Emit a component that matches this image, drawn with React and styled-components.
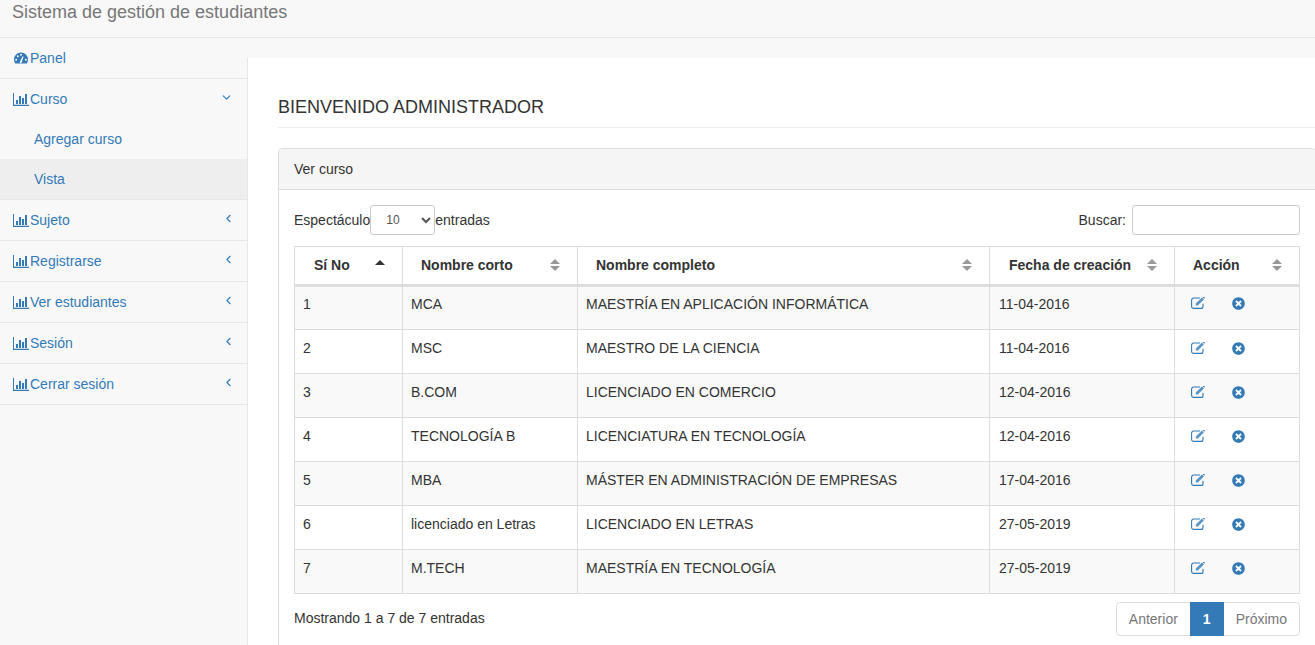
import React from 'react'
import styled, { createGlobalStyle } from 'styled-components'
import { FaTimesCircle } from 'react-icons/fa'
import { FiChevronDown, FiChevronLeft } from 'react-icons/fi'

const GlobalStyle = createGlobalStyle`
    html, body {
        margin: 0;
        height: 100%;
        overflow: hidden;
    }

    body {
        background: #f8f8f8;
        color: #333;
        font-family: "Liberation Sans", Arial, sans-serif;
        font-size: 14px;
        line-height: 20px;
    }

    * {
        box-sizing: border-box;
    }
`

const menu = [
    { label: 'Curso', open: true, children: ['Agregar curso', 'Vista'] },
    { label: 'Sujeto' },
    { label: 'Registrarse' },
    { label: 'Ver estudiantes' },
    { label: 'Sesión' },
    { label: 'Cerrar sesión' },
]

const courses = [
    ['1', 'MCA', 'MAESTRÍA EN APLICACIÓN INFORMÁTICA', '11-04-2016'],
    ['2', 'MSC', 'MAESTRO DE LA CIENCIA', '11-04-2016'],
    ['3', 'B.COM', 'LICENCIADO EN COMERCIO', '12-04-2016'],
    ['4', 'TECNOLOGÍA B', 'LICENCIATURA EN TECNOLOGÍA', '12-04-2016'],
    ['5', 'MBA', 'MÁSTER EN ADMINISTRACIÓN DE EMPRESAS', '17-04-2016'],
    ['6', 'licenciado en Letras', 'LICENCIADO EN LETRAS', '27-05-2019'],
    ['7', 'M.TECH', 'MAESTRÍA EN TECNOLOGÍA', '27-05-2019'],
]

const columns = [
    { label: 'Sí No', width: 108, sorted: true },
    { label: 'Nombre corto', width: 175 },
    { label: 'Nombre completo', width: 412 },
    { label: 'Fecha de creación', width: 185 },
    { label: 'Acción', width: 125 },
]

const BarChart = () => (
    <svg width="16" height="13" viewBox="0 0 16 13" fill="currentColor">
        <path d="M0 0h1v11.800h15V13H0z" />
        <path d="M3 7h2v4H3zM6 3h2v8H6zM9 5h2v6H9zM12 1h2v10h-2z" />
    </svg>
)

const Gauge = () => (
    <svg width="14" height="12" viewBox="0 0 14 12">
        <path
            fill="currentColor"
            d="M7 .5A7 7 0 0 0 0 7.500c0 1.400.4 2.700 1.100 3.800.1.200.3.200.5.200h10.800c.2 0 .4 0 .5-.2A7 7 0 0 0 14 7.500 7 7 0 0 0 7 .5z"
        />
        <g fill="#f8f8f8">
            <circle cx="2.200" cy="7.800" r="1" />
            <circle cx="3.800" cy="4.200" r="1" />
            <circle cx="7" cy="2.800" r="1" />
            <circle cx="11.800" cy="7.800" r="1" />
            <path d="M6 9.500l2.600-5.200 1 .4L7.800 10a1 1 0 1 1-1.800-.5z" />
        </g>
    </svg>
)

const EditIcon = () => (
    <svg width="14" height="13" viewBox="0 1 14 13">
        <path
            d="M9 2H2.800A2.300 2.300 0 0 0 .6 4.300v6.100a2 2 0 0 0 2.200 2h7.200a2 2 0 0 0 2-2V7.800"
            fill="none"
            stroke="currentColor"
            strokeWidth="1.100"
        />
        <path d="M4.800 7.600L10.900 1.500l2 2-6.100 6.100H4.800z" fill="currentColor" opacity="0.8" />
        <path d="M11.500 1.100l.6-.5c.2-.2.5-.2.7 0l.9.9c.2.2.2.5 0 .7l-.5.6z" fill="currentColor" />
    </svg>
)

const SortCaret = ({ sorted }) => (
    <svg width="10" height="12" viewBox="0 0 10 12">
        <path d="M0 5L5 0l5 5z" fill={sorted ? '#333' : '#999'} />
        {!sorted && <path d="M0 7l5 5 5-5z" fill="#999" />}
    </svg>
)

const App = () => {
    return (
        <>
            <GlobalStyle />
            <Navbar>
                <Brand>Sistema de gestión de estudiantes</Brand>
            </Navbar>
            <Layout>
                <Sidebar>
                    <SideItem>
                        <SideLink>
                            <IconSlot><Gauge /></IconSlot>
                            Panel
                        </SideLink>
                    </SideItem>
                    {menu.map((item) => (
                        <SideItem key={item.label}>
                            <SideLink>
                                <IconSlot><BarChart /></IconSlot>
                                {item.label}
                                <Arrow $open={item.open}>
                                    {item.open ? <FiChevronDown size={13} /> : <FiChevronLeft size={13} />}
                                </Arrow>
                            </SideLink>
                            {item.children && item.children.map((child) => (
                                <SubLink key={child} $active={child === 'Vista'}>{child}</SubLink>
                            ))}
                        </SideItem>
                    ))}
                </Sidebar>
                <Wrapper>
                    <Heading>BIENVENIDO ADMINISTRADOR</Heading>
                    <Panel>
                        <PanelHeading>Ver curso</PanelHeading>
                        <PanelBody>
                            <Controls>
                                <ControlLabel>
                                    Espectáculo
                                    <PageSize defaultValue="10">
                                        <option value="10">10</option>
                                        <option value="25">25</option>
                                    </PageSize>
                                    entradas
                                </ControlLabel>
                                <ControlLabel>
                                    Buscar:
                                    <SearchInput type="search" />
                                </ControlLabel>
                            </Controls>
                            <Table>
                                <colgroup>
                                    {columns.map((col) => <col key={col.label} width={col.width} />)}
                                </colgroup>
                                <thead>
                                    <tr>
                                        {columns.map((col) => (
                                            <HeadCell key={col.label}>
                                                <HeadInner>
                                                    {col.label}
                                                    <SortSlot $sorted={col.sorted}><SortCaret sorted={col.sorted} /></SortSlot>
                                                </HeadInner>
                                            </HeadCell>
                                        ))}
                                    </tr>
                                </thead>
                                <tbody>
                                    {courses.map((row) => (
                                        <Row key={row[0]}>
                                            {row.map((value, i) => <Cell key={i}>{value}</Cell>)}
                                            <Cell>
                                                <Actions>
                                                    <EditIcon />
                                                    <FaTimesCircle size={13} />
                                                </Actions>
                                            </Cell>
                                        </Row>
                                    ))}
                                </tbody>
                            </Table>
                            <Footer>
                                <span>Mostrando 1 a 7 de 7 entradas</span>
                                <Pagination>
                                    <PageButton>Anterior</PageButton>
                                    <PageButton $active>1</PageButton>
                                    <PageButton>Próximo</PageButton>
                                </Pagination>
                            </Footer>
                        </PanelBody>
                    </Panel>
                </Wrapper>
            </Layout>
        </>
    )
}

export default App

const Navbar = styled.div`
    height: 38px;
    border-bottom: 1px solid #e7e7e7;
    background: #f8f8f8;
`

const Brand = styled.div`
    padding: 2px 12px 0;
    font-size: 18px;
    line-height: 20px;
    color: #777;
`

const Layout = styled.div`
    display: flex;
    align-items: flex-start;
`

const Sidebar = styled.nav`
    width: 247px;
    flex-shrink: 0;
`

const SideItem = styled.div`
    border-bottom: 1px solid #e7e7e7;
`

const SideLink = styled.div`
    display: flex;
    align-items: center;
    height: 40px;
    padding-left: 13px;
    color: #337ab7;
    position: relative;
`

const IconSlot = styled.span`
    display: flex;
    justify-content: center;
    width: 16px;
    margin-right: 1px;
`

const Arrow = styled.span`
    position: absolute;
    right: ${(p) => (p.$open ? '14px' : '12px')};
    top: 12px;
    display: flex;
    color: #337ab7;
`

const SubLink = styled.div`
    height: 40px;
    padding: 10px 0 0 34px;
    color: #337ab7;
    background: ${(p) => (p.$active ? '#eeeeee' : 'transparent')};
`

const Wrapper = styled.main`
    flex: 1;
    min-width: 0;
    height: 607px;
    margin-top: 20px;
    padding: 0 0 0 30px;
    background: #fff;
    border-left: 1px solid #e7e7e7;
`

const Heading = styled.h1`
    display: flex;
    align-items: flex-end;
    height: 70px;
    margin: 0 0 20px;
    border-bottom: 1px solid #eee;
    font-size: 18px;
    font-weight: 400;
    line-height: 40px;
    color: #333;
`

const Panel = styled.section`
    margin-right: -1px;
    border: 1px solid #ddd;
    border-radius: 4px;
    background: #fff;
`

const PanelHeading = styled.div`
    height: 41px;
    padding: 10px 15px;
    background: #f5f5f5;
    border-bottom: 1px solid #ddd;
    border-radius: 3px 3px 0 0;
`

const PanelBody = styled.div`
    padding: 15px;
`

const Controls = styled.div`
    display: flex;
    justify-content: space-between;
    align-items: center;
    height: 30px;
    margin-bottom: 11px;
`

const ControlLabel = styled.label`
    display: flex;
    align-items: center;
`

const PageSize = styled.select`
    width: 65px;
    height: 30px;
    padding: 0 5px 0 11px;
    border: 1px solid #ccc;
    border-radius: 3px;
    background: #fff;
    color: #555;
    font-family: inherit;
    font-size: 12px;
`

const SearchInput = styled.input`
    width: 168px;
    height: 30px;
    margin-left: 6px;
    border: 1px solid #ccc;
    border-radius: 3px;
    background: #fff;
`

const Table = styled.table`
    width: 1005px;
    table-layout: fixed;
    border-collapse: collapse;
    border: 1px solid #ddd;
`

const HeadCell = styled.th`
    height: 39px;
    padding: 0 17px 2px 19px;
    border: 1px solid #ddd;
    border-bottom: 3px solid #ddd;
    text-align: left;
    font-weight: 700;

    &:nth-child(2), &:nth-child(3), &:nth-child(5) {
        padding-left: 18px;
    }
`

const HeadInner = styled.div`
    display: flex;
    justify-content: space-between;
    align-items: center;
`

const SortSlot = styled.span`
    display: flex;
    margin-top: ${(p) => (p.$sorted ? '2px' : '0')};
`

const Row = styled.tr`
    &:nth-child(odd) {
        background: #f9f9f9;
    }

    &:first-child td {
        padding-bottom: 9px;
    }
`

const Cell = styled.td`
    height: 44px;
    padding: 0 8px 7px;
    border: 1px solid #ddd;

    &:nth-child(4) {
        padding-left: 9px;
    }
`

const Actions = styled.div`
    display: flex;
    align-items: center;
    gap: 27px;
    padding-left: 8px;
    color: #337ab7;
`

const Footer = styled.div`
    display: flex;
    justify-content: space-between;
    margin-top: 8px;

    span {
        padding-top: 6px;
    }
`

const Pagination = styled.div`
    display: flex;
    height: 34px;
`

const PageButton = styled.a`
    padding: 6px 12px;
    margin-left: -1px;
    border: 1px solid ${(p) => (p.$active ? '#337ab7' : '#ddd')};
    color: ${(p) => (p.$active ? '#fff' : '#777')};
    background: ${(p) => (p.$active ? '#337ab7' : '#fff')};
    font-weight: ${(p) => (p.$active ? 700 : 400)};
    position: relative;
    z-index: ${(p) => (p.$active ? 1 : 0)};

    &:first-child {
        border-radius: 4px 0 0 4px;
    }

    &:last-child {
        border-radius: 0 4px 4px 0;
    }
`
